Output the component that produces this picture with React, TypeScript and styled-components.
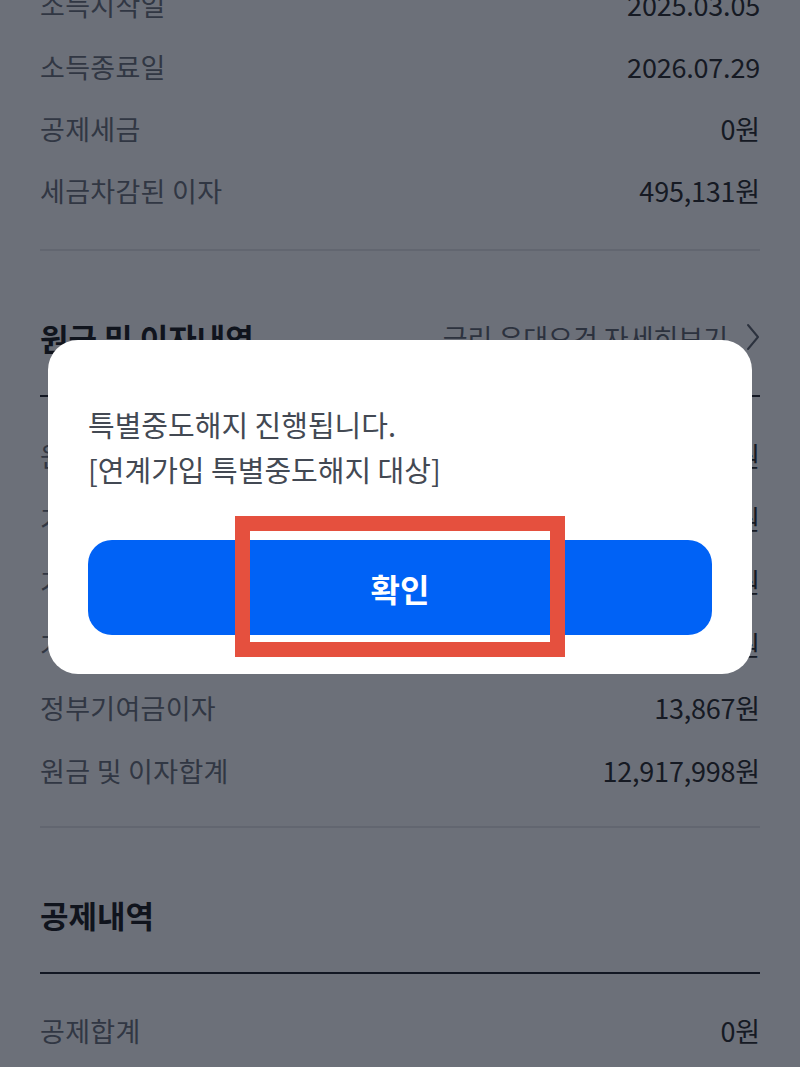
import React from 'react';
import styled, { createGlobalStyle } from 'styled-components';

const GlobalStyle = createGlobalStyle`
  html, body {
    margin: 0;
    padding: 0;
    background: #ffffff;
    font-family: "Noto Sans CJK KR", "Noto Sans", sans-serif;
    overflow: hidden;
  }
  * { box-sizing: border-box; }
`;

// the page is scrolled a little, so the first row is cut at the top
const Page = styled.div`
  margin-top: -54px;
  padding: 0 40px;
  color: #333333;
`;

const List = styled.div<{ $bottom?: number }>`
  padding: 27px 0 ${(p) => p.$bottom ?? 25}px;
`;

const Row = styled.div<{ $h?: number }>`
  height: ${(p) => p.$h ?? 63}px;
  display: flex;
  align-items: center;
  justify-content: space-between;
  font-size: 27px;
  letter-spacing: 0.3px;
`;

const Label = styled.span`
  color: #6c7079;
`;

const Value = styled.span`
  color: #2a2a2a;
  letter-spacing: -0.2px;
`;

const Divider = styled.div<{ $strong?: boolean }>`
  height: 2px;
  background: ${(p) => (p.$strong ? '#1f2228' : '#e6e7e9')};
`;

const SectionHeader = styled.div`
  padding: 66px 0 38px;
  height: 144px;
  display: flex;
  align-items: center;
  justify-content: space-between;
`;

const Title = styled.h2`
  margin: 0;
  font-size: 31px;
  font-weight: 700;
  color: #191919;
  letter-spacing: 0;
`;

const MoreLink = styled.a`
  display: flex;
  align-items: center;
  gap: 18px;
  font-size: 27px;
  color: #60646d;
  text-decoration: none;
`;

const Overlay = styled.div`
  position: fixed;
  inset: 0;
  background: rgba(10, 17, 32, 0.6);
  padding-top: 340px;
`;

const Modal = styled.div`
  width: 704px;
  margin: 0 auto;
  background: #ffffff;
  border-radius: 30px;
  padding: 62px 40px 39px;
`;

const Message = styled.p`
  margin: 0 0 48px;
  font-size: 29px;
  line-height: 45px;
  color: #434953;
  letter-spacing: 0;
`;

const ButtonWrap = styled.div`
  position: relative;
`;

const ConfirmButton = styled.button`
  width: 100%;
  height: 95px;
  border: none;
  border-radius: 24px;
  background: #0062f6;
  color: #ffffff;
  font-family: "Noto Sans CJK KR", "Noto Sans", sans-serif;
  font-size: 32px;
  font-weight: 700;
`;

const Highlight = styled.div`
  position: absolute;
  left: 147px;
  top: -24px;
  width: 330px;
  height: 141px;
  border: 15px solid #e5503e;
  pointer-events: none;
`;

const Chevron = () => (
  <svg width="14" height="28" viewBox="0 0 14 28" fill="none">
    <path d="M2 2 L12 14 L2 26" stroke="#60646d" strokeWidth="2" strokeLinecap="round" strokeLinejoin="round" />
  </svg>
);

const topRows = [
  ['소득시작일', '2025.03.05'],
  ['소득종료일', '2026.07.29'],
  ['공제세금', '0원'],
  ['세금차감된 이자', '495,131원'],
];

const interestRows = [
  ['원금', '12,000,000원'],
  ['기본이자', '408,000원'],
  ['기본우대이자', '0원'],
  ['가산이자', '496,131원'],
  ['정부기여금이자', '13,867원'],
  ['원금 및 이자합계', '12,917,998원'],
];

export default function App() {
  return (
    <>
      <GlobalStyle />
      <Page>
        <List $bottom={28}>
          {topRows.map(([label, value]) => (
            <Row key={label} $h={62}>
              <Label>{label}</Label>
              <Value>{value}</Value>
            </Row>
          ))}
        </List>
        <Divider />
        <SectionHeader>
          <Title>원금 및 이자내역</Title>
          <MoreLink>
            금리 우대요건 자세히보기
            <Chevron />
          </MoreLink>
        </SectionHeader>
        <Divider $strong />
        <List $bottom={24}>
          {interestRows.map(([label, value]) => (
            <Row key={label}>
              <Label>{label}</Label>
              <Value>{value}</Value>
            </Row>
          ))}
        </List>
        <Divider />
        <SectionHeader>
          <Title>공제내역</Title>
        </SectionHeader>
        <Divider $strong />
        <List>
          <Row $h={58}>
            <Label>공제합계</Label>
            <Value>0원</Value>
          </Row>
        </List>
      </Page>
      <Overlay>
        <Modal>
          <Message>
            특별중도해지 진행됩니다.
            <br />
            [연계가입 특별중도해지 대상]
          </Message>
          <ButtonWrap>
            <ConfirmButton>확인</ConfirmButton>
            <Highlight />
          </ButtonWrap>
        </Modal>
      </Overlay>
    </>
  );
}
